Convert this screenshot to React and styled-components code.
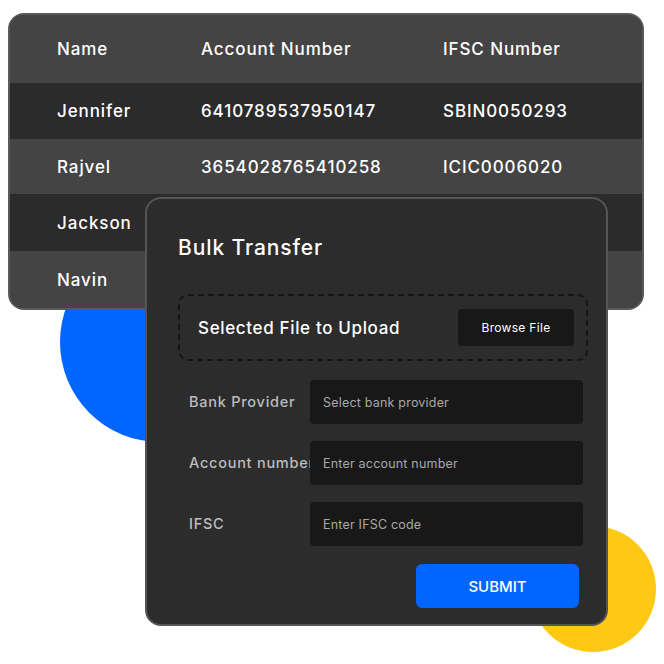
import styled, { createGlobalStyle } from "styled-components";

const GlobalStyle = createGlobalStyle`
  body {
    margin: 0;
    background: #ffffff;
    font-family: "Inter", "Noto Sans", sans-serif;
  }
`;

const Stage = styled.div`
  position: relative;
  width: 664px;
  height: 664px;
  overflow: hidden;
  padding: 13px 0 0 8px;
  box-sizing: border-box;
`;

const Circle = styled.div`
  position: absolute;
  border-radius: 50%;
  width: ${(p) => p.$size}px;
  height: ${(p) => p.$size}px;
  left: ${(p) => p.$left}px;
  top: ${(p) => p.$top}px;
  background: ${(p) => p.$color};
`;

const TableCard = styled.div`
  position: relative;
  width: 636px;
  box-sizing: border-box;
  border: 2px solid #5a5a5a;
  border-radius: 16px;
  overflow: hidden;
  background: #2b2b2b;
`;

const Row = styled.div`
  display: grid;
  grid-template-columns: 144px 242px 1fr;
  align-items: center;
  padding-left: 47px;
  height: ${(p) => p.$height}px;
  background: ${(p) => (p.$light ? "#444444" : "#2b2b2b")};
  color: #ffffff;
  font-size: 17px;
  font-weight: 500;
  letter-spacing: 0.9px;
`;

const Modal = styled.div`
  position: absolute;
  left: 145px;
  top: 197px;
  width: 463px;
  height: 429px;
  box-sizing: border-box;
  border: 2px solid #555555;
  border-radius: 16px;
  background: #2c2c2c;
  padding: 34px 18px 16px 31px;
  display: flex;
  flex-direction: column;
`;

const Title = styled.h2`
  margin: 0;
  font-size: 21px;
  font-weight: 500;
  color: #ffffff;
  line-height: 30px;
  letter-spacing: 0.9px;
`;

const DropZone = styled.div`
  margin-top: 31px;
  width: 410px;
  height: 67px;
  box-sizing: border-box;
  border: 2px dashed #161616;
  border-radius: 10px;
  display: flex;
  align-items: center;
  justify-content: space-between;
  padding: 0 12px 0 18px;
`;

const DropText = styled.span`
  color: #ffffff;
  font-size: 17px;
  font-weight: 500;
  letter-spacing: 0.65px;
`;

const BrowseButton = styled.button`
  width: 116px;
  height: 37px;
  border: none;
  border-radius: 4px;
  background: #181818;
  color: #ffffff;
  font-family: inherit;
  font-size: 12px;
  letter-spacing: 0.3px;
`;

const Form = styled.div`
  margin-top: 19px;
  display: flex;
  flex-direction: column;
  gap: 17px;
  padding: 0 5px 0 11px;
`;

const Field = styled.div`
  display: flex;
  align-items: center;
`;

const Label = styled.label`
  width: 121px;
  flex: none;
  white-space: nowrap;
  overflow: hidden;
  color: #bdbdbd;
  font-size: 14.5px;
  font-weight: 500;
  letter-spacing: 0.75px;
  margin-top: -2px;
`;

const Input = styled.input`
  flex: 1;
  height: 44px;
  box-sizing: border-box;
  border: none;
  border-radius: 4px;
  background: #181818;
  padding: 0 13px;
  font-family: inherit;
  font-size: 12.5px;
  letter-spacing: 0.2px;
  color: #ffffff;
  outline: none;

  &::placeholder {
    color: #a8a8a8;
  }
`;

const Actions = styled.div`
  margin-top: 18px;
  display: flex;
  justify-content: flex-end;
  padding-right: 9px;
`;

const SubmitButton = styled.button`
  width: 163px;
  height: 44px;
  border: none;
  border-radius: 6px;
  background: #0066ff;
  color: #ffffff;
  font-family: inherit;
  font-size: 15px;
  font-weight: 500;
`;

const rows = [
  ["Jennifer", "6410789537950147", "SBIN0050293"],
  ["Rajvel", "3654028765410258", "ICIC0006020"],
  ["Jackson", "", ""],
  ["Navin", "", ""],
];

const rowHeights = [56, 55, 57, 57];

const fields = [
  ["Bank Provider", "Select bank provider"],
  ["Account number", "Enter account number"],
  ["IFSC", "Enter IFSC code"],
];

export default function App() {
  return (
    <Stage>
      <GlobalStyle />
      <Circle $size={200} $left={60} $top={242} $color="#0066ff" />
      <Circle $size={126} $left={530} $top={526} $color="#ffc814" />

      <TableCard>
        <Row $light $height={68}>
          <span>Name</span>
          <span>Account Number</span>
          <span>IFSC Number</span>
        </Row>
        {rows.map((r, i) => (
          <Row key={r[0]} $light={i % 2 === 1} $height={rowHeights[i]}>
            <span>{r[0]}</span>
            <span>{r[1]}</span>
            <span>{r[2]}</span>
          </Row>
        ))}
      </TableCard>

      <Modal>
        <Title>Bulk Transfer</Title>
        <DropZone>
          <DropText>Selected File to Upload</DropText>
          <BrowseButton>Browse File</BrowseButton>
        </DropZone>
        <Form>
          {fields.map(([label, ph]) => (
            <Field key={label}>
              <Label>{label}</Label>
              <Input placeholder={ph} />
            </Field>
          ))}
        </Form>
        <Actions>
          <SubmitButton>SUBMIT</SubmitButton>
        </Actions>
      </Modal>
    </Stage>
  );
}
